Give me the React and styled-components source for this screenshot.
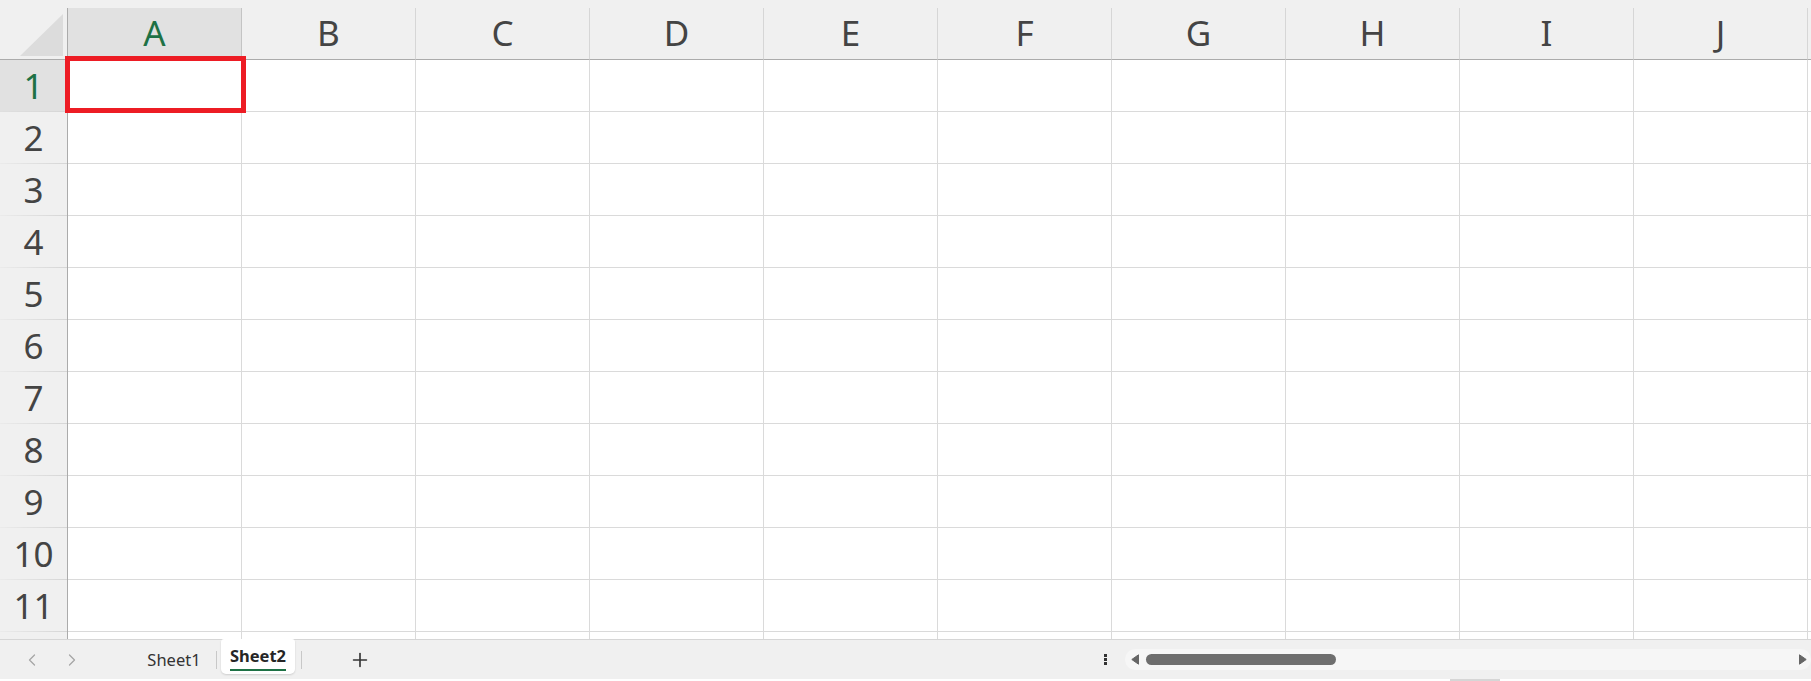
import React from 'react';
import styled, { createGlobalStyle } from 'styled-components';
import { ChevronLeft, ChevronRight, Plus } from 'lucide-react';

const GlobalStyle = createGlobalStyle`
  html, body {
    margin: 0;
    padding: 0;
    background: #ffffff;
    overflow: hidden;
  }
  * {
    box-sizing: border-box;
  }
`;

// K and row 12 are only partly in view, so their labels stay blank
const COLUMNS = ['A', 'B', 'C', 'D', 'E', 'F', 'G', 'H', 'I', 'J', ''];
const ROWS = [1, 2, 3, 4, 5, 6, 7, 8, 9, 10, 11, ''];

const Sheet = styled.div`
  width: 1811px;
  height: 681px;
  display: flex;
  flex-direction: column;
  font-family: "Noto Sans", "Open Sans", sans-serif;
  color: #444444;
  overflow: hidden;
`;

const GridArea = styled.div`
  position: relative;
  height: 639px;
  width: 1811px;
  overflow: hidden;
  flex-shrink: 0;
`;

const TopStrip = styled.div`
  height: 8px;
  background: #f0f0f0;
`;

const HeaderRow = styled.div`
  display: flex;
  height: 52px;
  background: #f0f0f0;
`;

const Corner = styled.div`
  flex: 0 0 68px;
  display: flex;
  align-items: flex-end;
  justify-content: flex-end;
  padding: 0 4px 3px 0;
  border-right: 1px solid #ababab;
  border-bottom: 1px solid #ababab;
`;

const ColHeader = styled.div`
  flex: 0 0 174px;
  display: flex;
  align-items: center;
  justify-content: center;
  font-size: 35px;
  line-height: 1;
  padding-bottom: 2px;
  background: ${p => (p.$selected ? '#e1e1e1' : '#f0f0f0')};
  color: ${p => (p.$selected ? '#1e7145' : '#444444')};
  border-right: 1px solid ${p => (p.$selected ? '#c4c4c4' : '#d6d6d6')};
  border-bottom: 1px solid #ababab;
`;

const Row = styled.div`
  display: flex;
  height: 52px;
`;

const RowHeader = styled.div`
  position: relative;
  flex: 0 0 68px;
  display: flex;
  align-items: center;
  justify-content: center;
  font-size: 35px;
  line-height: 1;
  padding-bottom: 2px;
  background: ${p => (p.$selected ? '#e1e1e1' : '#f0f0f0')};
  color: ${p => (p.$selected ? '#1e7145' : '#444444')};
  border-right: 1px solid #ababab;

  &::after {
    content: '';
    position: absolute;
    left: 0;
    right: 0;
    bottom: 0;
    height: 1px;
    background: linear-gradient(to right, rgba(214, 214, 214, 0.2), #d6d6d6);
  }
`;

const Cell = styled.div`
  flex: 0 0 174px;
  background: #ffffff;
  border-right: 1px solid #dadada;
  border-bottom: 1px solid #dadada;
`;

const Selection = styled.div`
  position: absolute;
  left: 65px;
  top: 56px;
  width: 181px;
  height: 57px;
  border: 5px solid #ed1c24;
  pointer-events: none;
`;

const TabBar = styled.div`
  display: flex;
  align-items: center;
  height: 40px;
  flex-shrink: 0;
  background: #f0f0f0;
  border-top: 1px solid #d6d6d6;
`;

const LeftGroup = styled.div`
  flex: 1;
  display: flex;
  align-items: center;
  align-self: stretch;
  padding-left: 12px;
`;

const NavButton = styled.div`
  width: 40px;
  display: flex;
  align-items: center;
  justify-content: center;
  color: #a6a6a6;
`;

const TabList = styled.div`
  display: flex;
  align-items: center;
  align-self: stretch;
  margin-left: 45px;
`;

const Tab = styled.div`
  width: 74px;
  display: flex;
  justify-content: center;
  align-items: ${p => (p.$active ? 'flex-start' : 'center')};
  align-self: ${p => (p.$active ? 'flex-start' : 'stretch')};
  height: ${p => (p.$active ? '35px' : 'auto')};
  margin-top: ${p => (p.$active ? '-1px' : '0')};
  padding-top: ${p => (p.$active ? '7px' : '0')};
  background: ${p => (p.$active ? '#ffffff' : 'transparent')};
  border-radius: ${p => (p.$active ? '3px 3px 5px 5px' : '0')};
  box-shadow: ${p => (p.$active ? '0 1px 2px rgba(0, 0, 0, 0.14)' : 'none')};
`;

const TabLabel = styled.span`
  font-size: 16.5px;
  line-height: 20px;
  font-weight: ${p => (p.$active ? 700 : 400)};
  color: ${p => (p.$active ? '#262626' : '#333333')};
  padding-bottom: ${p => (p.$active ? '3px' : '0')};
  border-bottom: ${p => (p.$active ? '2px solid #1e7145' : 'none')};
`;

const TabDivider = styled.div`
  width: 1px;
  height: 18px;
  margin: 0 ${p => p.$right || 4}px 0 ${p => p.$left || 5}px;
  background: #c8c8c8;
`;

const AddButton = styled.div`
  width: 40px;
  display: flex;
  align-items: center;
  justify-content: center;
  margin-left: 34px;
  color: #333333;
`;

const MoreButton = styled.div`
  width: 10px;
  display: flex;
  justify-content: center;
  color: #333333;
`;

const Track = styled.div`
  width: 686px;
  height: 21px;
  margin-left: 15px;
  display: flex;
  align-items: center;
  padding: 0 4px 0 6px;
  border-radius: 11px;
  background: #f6f6f6;
`;

const Thumb = styled.div`
  width: 190px;
  height: 11px;
  margin-left: 7px;
  border-radius: 6px;
  background: #6e6e6e;
`;

const TrackSpacer = styled.div`
  flex: 1;
`;

const BottomStrip = styled.div`
  height: 2px;
  flex-shrink: 0;
  background: #ffffff;
  display: flex;
`;

const ResizeHandle = styled.div`
  width: 50px;
  height: 2px;
  margin-left: 1450px;
  background: #d6d6d6;
`;

const CornerTriangle = () => (
  <svg width="43" height="42" viewBox="0 0 43 42">
    <polygon points="0,42 43,42 43,0" fill="#dcdcdc" />
  </svg>
);

const MoreDots = () => (
  <svg width="3" height="11" viewBox="0 0 3 11">
    <rect x="0" y="0" width="3" height="3" fill="currentColor" />
    <rect x="0" y="4" width="3" height="3" fill="currentColor" />
    <rect x="0" y="8" width="3" height="3" fill="currentColor" />
  </svg>
);

const ArrowLeft = () => (
  <svg width="8" height="11" viewBox="0 0 8 11">
    <path d="M7.5 0.8 L7.5 10.2 L0.8 5.5 Z" fill="#666666" stroke="#666666" strokeLinejoin="round" strokeWidth="1" />
  </svg>
);

const ArrowRight = () => (
  <svg width="8" height="11" viewBox="0 0 8 11">
    <path d="M0.5 0.8 L0.5 10.2 L7.2 5.5 Z" fill="#666666" stroke="#666666" strokeLinejoin="round" strokeWidth="1" />
  </svg>
);

export default function App() {
  return (
    <>
      <GlobalStyle />
      <Sheet>
        <GridArea>
          <TopStrip />
          <HeaderRow>
            <Corner>
              <CornerTriangle />
            </Corner>
            {COLUMNS.map((col, i) => (
              <ColHeader key={i} $selected={col === 'A'}>
                {col}
              </ColHeader>
            ))}
          </HeaderRow>
          {ROWS.map((row, r) => (
            <Row key={r}>
              <RowHeader $selected={row === 1}>{row}</RowHeader>
              {COLUMNS.map((col, i) => (
                <Cell key={i} />
              ))}
            </Row>
          ))}
          <Selection />
        </GridArea>

        <TabBar>
          <LeftGroup>
            <NavButton>
              <ChevronLeft size={20} strokeWidth={1.5} />
            </NavButton>
            <NavButton>
              <ChevronRight size={20} strokeWidth={1.5} />
            </NavButton>
            <TabList>
              <Tab>
                <TabLabel>Sheet1</TabLabel>
              </Tab>
              <TabDivider />
              <Tab $active>
                <TabLabel $active>Sheet2</TabLabel>
              </Tab>
              <TabDivider $left={6} $right={4} />
            </TabList>
            <AddButton>
              <Plus size={22} strokeWidth={1.8} />
            </AddButton>
          </LeftGroup>
          <MoreButton>
            <MoreDots />
          </MoreButton>
          <Track>
            <ArrowLeft />
            <Thumb />
            <TrackSpacer />
            <ArrowRight />
          </Track>
        </TabBar>
        <BottomStrip>
          <ResizeHandle />
        </BottomStrip>
      </Sheet>
    </>
  );
}
